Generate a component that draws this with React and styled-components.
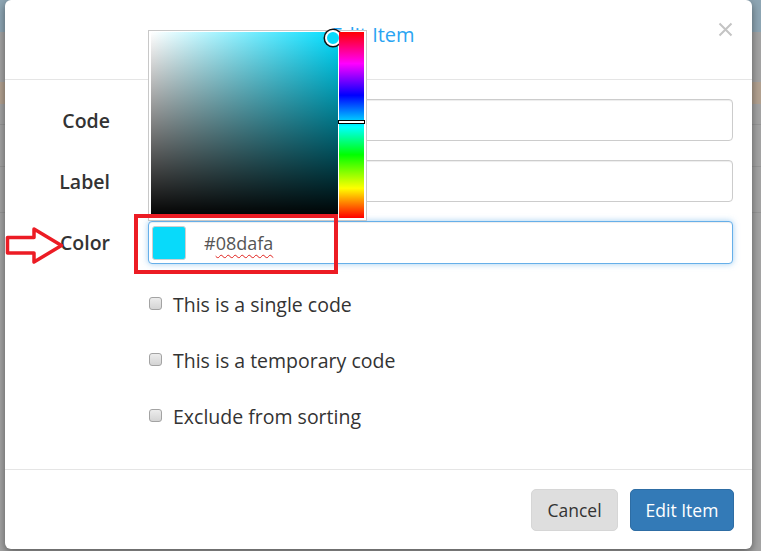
import React from "react";
import styled, { createGlobalStyle } from "styled-components";

const Global = createGlobalStyle`
  html, body { margin: 0; padding: 0; }
  body {
    font-family: "Open Sans", "Noto Sans", "Liberation Sans", sans-serif;
    color: #333;
    overflow: hidden;
  }
  * { box-sizing: border-box; }
`;

const Page = styled.div`
  width: 761px;
  height: 551px;
  padding-left: 5px;
  background:
    linear-gradient(#8ea6b4, #8ea6b4) 0 0 / 100% 32px no-repeat,
    linear-gradient(#b3a291, #b3a291) 0 82px / 100% 22px no-repeat,
    linear-gradient(#979797, #979797) 0 124px / 100% 1px no-repeat,
    linear-gradient(#979797, #979797) 0 166px / 100% 1px no-repeat,
    linear-gradient(#979797, #979797) 0 212px / 100% 1px no-repeat,
    #a4a4a4;
`;

const Modal = styled.div`
  width: 747px;
  height: 549px;
  background: #fff;
  border-radius: 6px;
  box-shadow: 0 3px 9px rgba(0, 0, 0, 0.45);
  display: flex;
  flex-direction: column;
`;

const Header = styled.div`
  height: 80px;
  border-bottom: 1px solid #e5e5e5;
  display: flex;
  align-items: flex-start;
  padding: 21px 19px 0 23px;
`;

const Title = styled.h4`
  flex: 1;
  margin: 0;
  text-align: center;
  font-size: 20px;
  line-height: 28px;
  font-weight: 400;
  color: #2aa4f2;
`;

const Close = styled.button`
  border: 0;
  background: none;
  padding: 0;
  margin-top: 1px;
  width: 15px;
  height: 15px;
  display: flex;
  cursor: pointer;
`;

const Body = styled.div`
  padding: 19px 19px 0 0;
  flex: 1;
`;

const FormGrid = styled.div`
  display: grid;
  grid-template-columns: 105px 1fr;
  column-gap: 38px;
  row-gap: 19px;
`;

const Label = styled.label`
  position: relative;
  display: flex;
  align-items: center;
  justify-content: flex-end;
  font-size: 19.5px;
  font-weight: 600;
  color: #333;
  height: ${(p) => p.$h || 42}px;
`;

const Field = styled.div`
  position: relative;
  height: ${(p) => p.$h || 42}px;
  border: 1px solid ${(p) => (p.$focus ? "#66afe9" : "#ccc")};
  border-radius: 4px;
  background: #fff;
  box-shadow: ${(p) =>
    p.$focus
      ? "inset 0 1px 1px rgba(0,0,0,.075), 0 0 6px rgba(102,175,233,.6)"
      : "inset 0 1px 1px rgba(0,0,0,.075)"};
  display: flex;
  align-items: center;
  padding: 0 3px;
`;

const Swatch = styled.span`
  width: 34px;
  height: 34px;
  border-radius: 3px;
  border: 1px solid #cfcfcf;
  background: ${(p) => p.$color};
  flex: none;
`;

const ColorText = styled.span`
  margin-left: 18px;
  font-size: 18px;
  color: #555;
  text-decoration: underline wavy #e0201c;
  text-decoration-thickness: 1px;
  text-underline-offset: 4px;
`;

const Hash = styled.span`
  text-decoration: none;
  display: inline-block;
`;

const Picker = styled.div`
  position: absolute;
  left: -1px;
  bottom: calc(100% + 1px);
  width: 219px;
  height: 191px;
  background: #fff;
  border: 1px solid #c8c8c8;
  padding: 1px 2px 2px 2px;
  display: flex;
  gap: 1px;
  z-index: 2;
`;

const Saturation = styled.div`
  position: relative;
  width: 187px;
  height: 100%;
  background:
    linear-gradient(to top, #000, rgba(0, 0, 0, 0)),
    linear-gradient(to right, #fff, #00ddff);
`;

const SatHandle = styled.span`
  position: absolute;
  width: 16px;
  height: 16px;
  margin: -8px 0 0 -8px;
  border-radius: 50%;
  background: #08dafa;
  border: 2px solid #fff;
  box-shadow: 0 0 0 1.5px #111;
`;

const Hue = styled.div`
  position: relative;
  flex: 1;
  background: linear-gradient(
    to bottom,
    #ff0000 0%,
    #ff00ff 17%,
    #0000ff 34%,
    #00ffff 51%,
    #00ff00 66%,
    #ffff00 84%,
    #ff0000 100%
  );
`;

const HueHandle = styled.span`
  position: absolute;
  left: -1px;
  right: -1px;
  height: 4px;
  background: #fff;
  border: 1px solid #000;
`;

const RedBox = styled.div`
  position: absolute;
  left: -15px;
  top: -8px;
  width: 204px;
  height: 60px;
  border: 4px solid #ec1c24;
  pointer-events: none;
  z-index: 3;
`;

const Arrow = styled.svg`
  position: absolute;
  left: 0;
  top: 6px;
  overflow: visible;
`;

const Checks = styled.div`
  margin: 12px 0 0 143px;
  display: flex;
  flex-direction: column;
`;

const CheckRow = styled.label`
  height: 56px;
  display: flex;
  align-items: center;
  gap: 11px;
  font-size: 19.5px;
  color: #333;
`;

const Box = styled.span`
  width: 13px;
  height: 13px;
  margin-left: 1px;
  border: 1px solid #a3a3a3;
  border-radius: 3px;
  background: linear-gradient(#ececec, #d4d4d4);
  flex: none;
  position: relative;
  top: -1px;
`;

const Footer = styled.div`
  border-top: 1px solid #e5e5e5;
  padding: 19px 18px 18px;
  display: flex;
  justify-content: flex-end;
  gap: 12px;
`;

const Button = styled.button`
  height: 42px;
  width: ${(p) => p.$w}px;
  border: 1px solid ${(p) => (p.$primary ? "#2e6da4" : "#d6d6d6")};
  border-radius: 5px;
  background: ${(p) => (p.$primary ? "#337ab7" : "#dedede")};
  color: ${(p) => (p.$primary ? "#fff" : "#333")};
  font-family: "Open Sans", "Noto Sans", sans-serif;
  font-size: 17.5px;
  padding: 0;
  cursor: pointer;
`;

export default function App() {
  return (
    <Page>
      <Global />
      <Modal>
        <Header>
          <Title>Edit Item</Title>
          <Close aria-label="Close">
            <svg width="15" height="15" viewBox="0 0 15 15">
              <path d="M1.5 1.5 L13.5 13.5 M13.5 1.5 L1.5 13.5" stroke="#c4c4c4" strokeWidth="2" />
            </svg>
          </Close>
        </Header>
        <Body>
          <FormGrid>
            <Label>Code</Label>
            <Field />
            <Label>Label</Label>
            <Field />
            <Label $h={43}>
              <Arrow width="60" height="38" viewBox="0 0 60 38">
                <polygon
                  points="2.5,10.5 29,10.5 29,2 56.5,18.5 29,35 29,26 2.5,26"
                  fill="none"
                  stroke="#ec1c24"
                  strokeWidth="3.5"
                  strokeLinejoin="round"
                />
              </Arrow>
              Color
            </Label>
            <Field $focus $h={43}>
              <Picker>
                <Saturation>
                  <SatHandle style={{ left: "182px", top: "6px" }} />
                </Saturation>
                <Hue>
                  <HueHandle style={{ top: "88px" }} />
                </Hue>
              </Picker>
              <RedBox />
              <Swatch $color="#08dafa" />
              <ColorText>
                <Hash>#</Hash>08dafa
              </ColorText>
            </Field>
          </FormGrid>
          <Checks>
            <CheckRow>
              <Box />
              This is a single code
            </CheckRow>
            <CheckRow>
              <Box />
              This is a temporary code
            </CheckRow>
            <CheckRow>
              <Box />
              Exclude from sorting
            </CheckRow>
          </Checks>
        </Body>
        <Footer>
          <Button $w={87}>Cancel</Button>
          <Button $primary $w={104}>Edit Item</Button>
        </Footer>
      </Modal>
    </Page>
  );
}
